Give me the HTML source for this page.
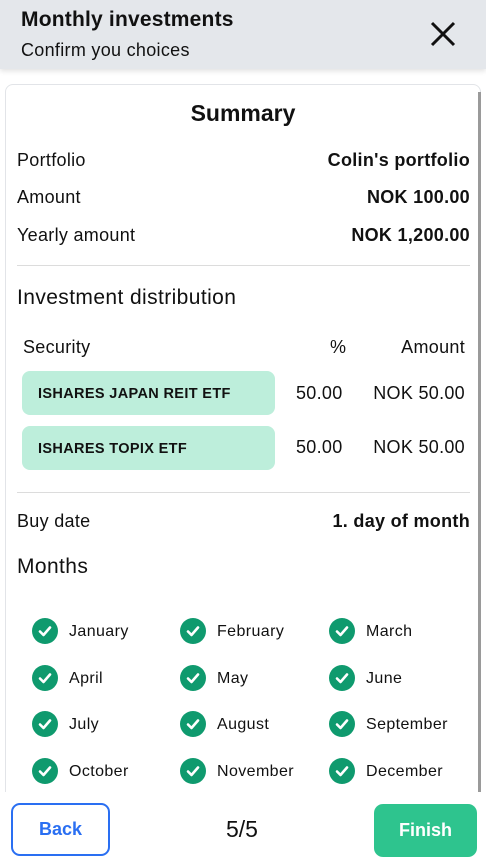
<!DOCTYPE html>
<html><head><meta charset="utf-8"><style>
*{margin:0;padding:0;box-sizing:border-box}
body{width:486px;height:864px;background:#fff;font-family:"Liberation Sans",sans-serif;color:#111;position:relative;overflow:hidden}
.a{position:absolute;white-space:nowrap}
.hdr{position:absolute;left:0;top:0;width:486px;height:69px;background:#e4e7eb;box-shadow:0 2px 5px rgba(0,0,0,.12);z-index:2}
.card{position:absolute;left:5px;top:84px;width:476px;height:720px;border:1px solid #e2e4e8;border-radius:8px;background:#fff}
.sb{position:absolute;left:478px;top:92px;width:3px;height:700px;background:#9a9a9a}
.f17{font-size:18px;letter-spacing:.3px}
.b{font-weight:bold}
.hr{position:absolute;left:17px;width:453px;height:1px;background:#dcdcdc}
.chip{position:absolute;left:22px;width:253px;height:44px;background:#bdeedb;border-radius:8px;font-size:14.5px;letter-spacing:.35px;font-weight:bold;padding:15px 16px 0;color:#111}
.ck{position:absolute;width:26px;height:26px;border-radius:50%;background:#0f9a6e}
.ck svg{position:absolute;left:5px;top:5px}
.m{position:absolute;font-size:16px;letter-spacing:.4px}
.bottom{position:absolute;left:0;top:792px;width:486px;height:72px;background:#fff}
</style></head><body>
<div class="hdr">
<div class="a b" style="left:21px;top:8px;font-size:21px;letter-spacing:.2px">Monthly investments</div>
<div class="a" style="left:21px;top:40px;font-size:18px;letter-spacing:.3px">Confirm you choices</div>
<svg class="a" style="left:430px;top:21px" width="26" height="26" viewBox="0 0 26 26"><path d="M2 2L24 24M24 2L2 24" stroke="#111" stroke-width="3"/></svg>
</div>
<div class="card"></div>
<div class="sb"></div>
<div class="a b" style="left:0;width:486px;text-align:center;top:100px;font-size:23px">Summary</div>
<div class="a f17" style="left:17px;top:150px">Portfolio</div>
<div class="a f17 b" style="right:16px;top:150px">Colin's portfolio</div>
<div class="a f17" style="left:17px;top:187px">Amount</div>
<div class="a f17 b" style="right:16px;top:187px">NOK 100.00</div>
<div class="a f17" style="left:17px;top:225px">Yearly amount</div>
<div class="a f17 b" style="right:16px;top:225px">NOK 1,200.00</div>
<div class="hr" style="top:265px"></div>
<div class="a" style="left:17px;top:286px;font-size:21px;letter-spacing:.4px">Investment distribution</div>
<div class="a f17" style="left:23px;top:337px">Security</div>
<div class="a f17" style="left:330px;top:337px">%</div>
<div class="a f17" style="right:21px;top:337px">Amount</div>
<div class="chip" style="top:371px">ISHARES JAPAN REIT ETF</div>
<div class="a f17" style="left:296px;top:383px">50.00</div>
<div class="a f17" style="right:21px;top:383px">NOK 50.00</div>
<div class="chip" style="top:426px">ISHARES TOPIX ETF</div>
<div class="a f17" style="left:296px;top:437px">50.00</div>
<div class="a f17" style="right:21px;top:437px">NOK 50.00</div>
<div class="hr" style="top:492px"></div>
<div class="a f17" style="left:17px;top:511px">Buy date</div>
<div class="a f17 b" style="right:16px;top:511px">1. day of month</div>
<div class="a" style="left:17px;top:555px;font-size:21px;letter-spacing:.4px">Months</div>
<div id="months"></div>
<div class="bottom"></div>
<div class="a" style="left:11px;top:803px;width:99px;height:53px;border:2px solid #2a6ff2;border-radius:9px;color:#2a6ff2;font-weight:bold;font-size:18px;text-align:center;line-height:49px">Back</div>
<div class="a" style="left:200px;width:84px;text-align:center;top:816px;font-size:23px">5/5</div>
<div class="a" style="left:374px;top:804px;width:103px;height:53px;background:#2ec48e;border-radius:9px;color:#fff;font-weight:bold;font-size:18px;text-align:center;line-height:53px">Finish</div>
<script>
var n=["January","February","March","April","May","June","July","August","September","October","November","December"],xs=[32,180,329],ys=[618,665,711,758],h="";
n.forEach(function(t,i){var x=xs[i%3],y=ys[Math.floor(i/3)];
h+='<div class="ck" style="left:'+x+'px;top:'+y+'px"><svg width="16" height="16" viewBox="0 0 16 16"><path d="M3 8.5L6.5 12L13 4.5" stroke="#fff" stroke-width="2.6" fill="none" stroke-linecap="round" stroke-linejoin="round"/></svg></div><div class="m" style="left:'+(x+37)+'px;top:'+(y+5)+'px">'+t+'</div>';});
document.getElementById("months").innerHTML=h;
</script>
</body></html>
